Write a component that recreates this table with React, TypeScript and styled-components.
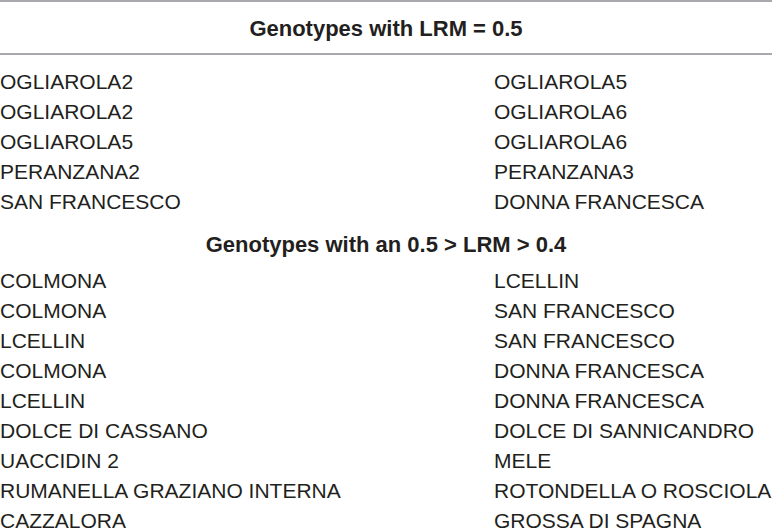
import React from "react";
import styled, { createGlobalStyle } from "styled-components";

const Global = createGlobalStyle`
  html, body { margin: 0; padding: 0; background: #fff; }
  body { font-family: "Liberation Sans", Arial, sans-serif; color: #231f20; }
`;

const Table = styled.div`
  width: 772px;
  border-top: 2px solid #a7a9ac;
`;

const HeadRow = styled.div`
  height: 53px;
  display: flex;
  align-items: center;
  justify-content: center;
  border-bottom: 2px solid #a7a9ac;
  font-weight: 700;
  font-size: 22px;
  padding-top: 3px;
  box-sizing: border-box;
  margin-bottom: 12px;
`;

const SubHead = styled.div`
  display: flex;
  justify-content: center;
  font-weight: 700;
  font-size: 22px;
  line-height: 30px;
  padding-top: 13px;
  padding-bottom: 6px;
`;

const Row = styled.div`
  display: grid;
  grid-template-columns: 494px 1fr;
  height: 30px;
  line-height: 30px;
  font-size: 21px;
  font-weight: 400;
  white-space: nowrap;
`;

const Cell = styled.div``;

const section1: [string, string][] = [
  ["OGLIAROLA2", "OGLIAROLA5"],
  ["OGLIAROLA2", "OGLIAROLA6"],
  ["OGLIAROLA5", "OGLIAROLA6"],
  ["PERANZANA2", "PERANZANA3"],
  ["SAN FRANCESCO", "DONNA FRANCESCA"],
];

const section2: [string, string][] = [
  ["COLMONA", "LCELLIN"],
  ["COLMONA", "SAN FRANCESCO"],
  ["LCELLIN", "SAN FRANCESCO"],
  ["COLMONA", "DONNA FRANCESCA"],
  ["LCELLIN", "DONNA FRANCESCA"],
  ["DOLCE DI CASSANO", "DOLCE DI SANNICANDRO"],
  ["UACCIDIN 2", "MELE"],
  ["RUMANELLA GRAZIANO INTERNA", "ROTONDELLA O ROSCIOLA"],
  ["CAZZALORA", "GROSSA DI SPAGNA"],
];

export default function App() {
  return (
    <>
      <Global />
      <Table>
        <HeadRow>Genotypes with LRM = 0.5</HeadRow>
        {section1.map(([a, b], i) => (
          <Row key={"a" + i}>
            <Cell>{a}</Cell>
            <Cell>{b}</Cell>
          </Row>
        ))}
        <SubHead>Genotypes with an 0.5 &gt; LRM &gt; 0.4</SubHead>
        {section2.map(([a, b], i) => (
          <Row key={"b" + i}>
            <Cell>{a}</Cell>
            <Cell>{b}</Cell>
          </Row>
        ))}
      </Table>
    </>
  );
}
